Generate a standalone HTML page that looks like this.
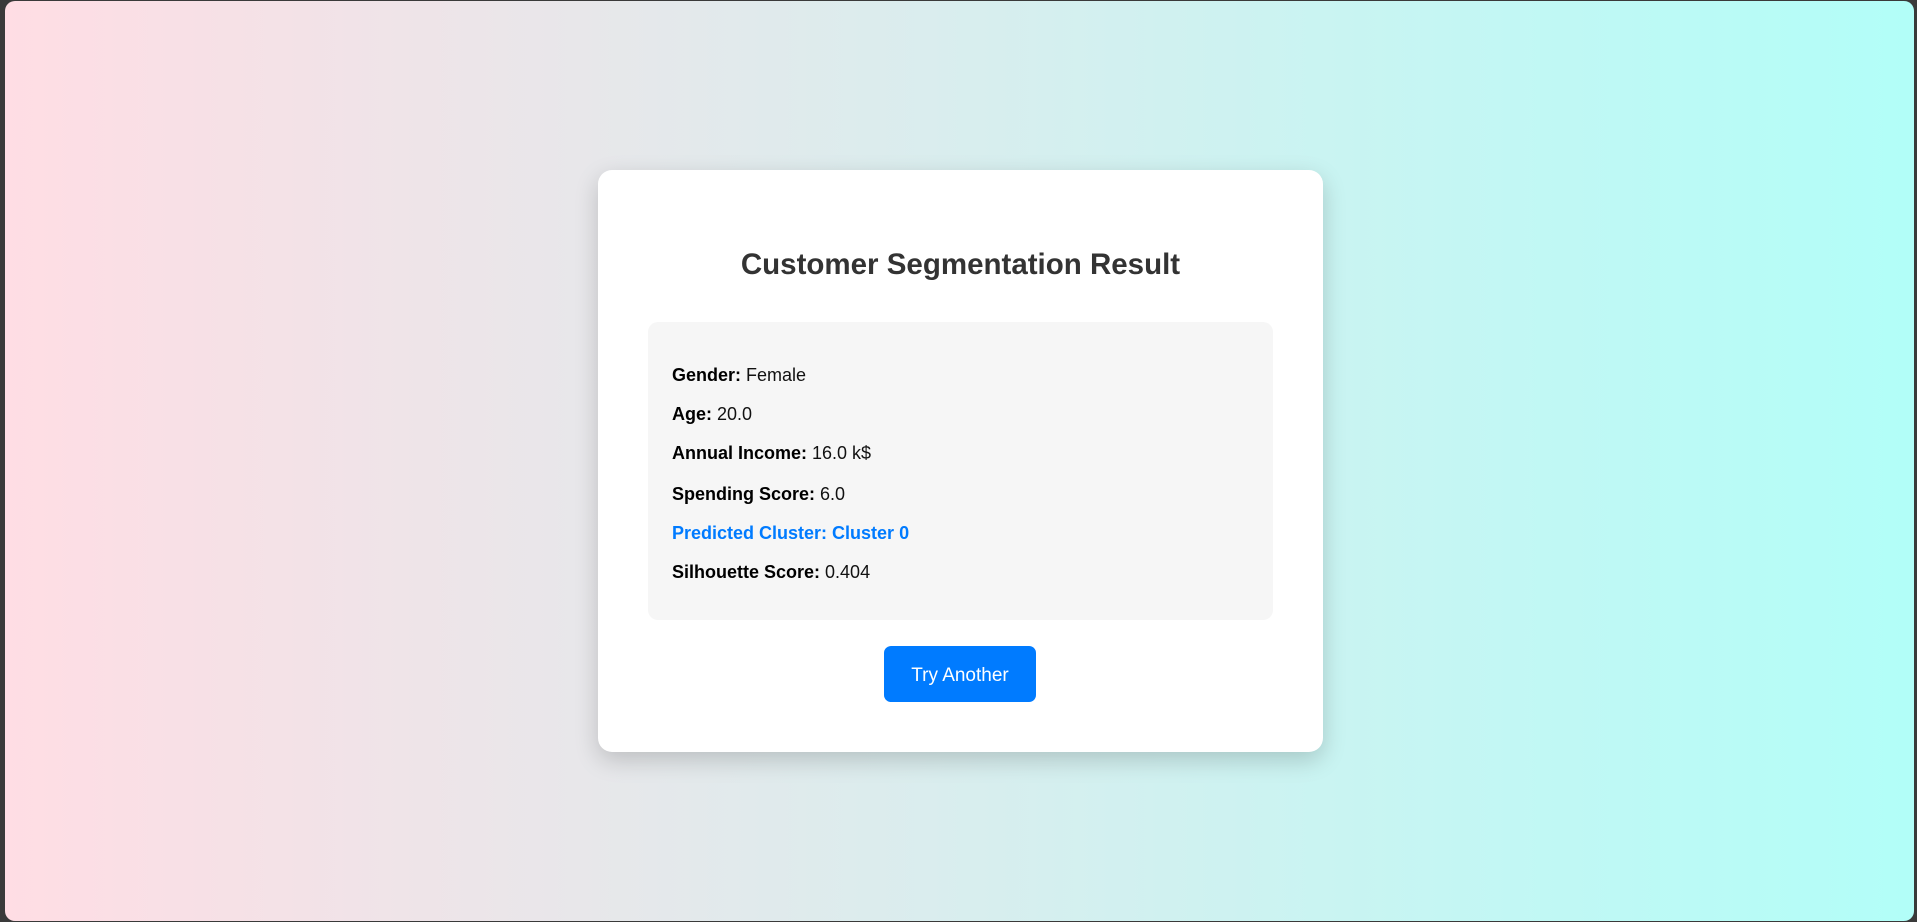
<!DOCTYPE html>
<html><head><meta charset="utf-8"><style>
html,body{margin:0;padding:0;width:1917px;height:922px;overflow:hidden;background:#3a3a3a;font-family:"Liberation Sans",sans-serif}
.win{position:absolute;left:5px;top:1px;width:1909px;height:920px;border-radius:10px;background:linear-gradient(to right,#ffdde4,#b2fef8)}
.card{position:absolute;left:598px;top:170px;width:725px;height:582px;background:#fff;border-radius:14px;box-shadow:0 8px 24px rgba(0,0,0,0.18)}
h1{position:absolute;top:247px;margin:0;text-align:center;font-size:29.5px;font-weight:bold;color:#333;line-height:36px}
.box{position:absolute;left:648px;top:322px;width:625px;height:298px;background:#f6f6f6;border-radius:10px}
.l{position:absolute;left:672px;font-size:18px;color:#111;line-height:24px}
.l b{color:#000}
.blue,.blue b{color:#007bff;font-weight:bold}
.btn{position:absolute;left:884px;top:646px;width:152px;height:56px;background:#007bff;border-radius:7px;color:#fff;font-size:19px;line-height:60px;text-align:center}
</style></head><body>
<div class="win"></div>
<div class="card"></div>
<h1 style="left:598px;width:725px">Customer Segmentation Result</h1>
<div class="box"></div>
<div class="l" style="top:363px"><b>Gender:</b> Female</div>
<div class="l" style="top:402px"><b>Age:</b> 20.0</div>
<div class="l" style="top:441px"><b>Annual Income:</b> 16.0 k$</div>
<div class="l" style="top:482px"><b>Spending Score:</b> 6.0</div>
<div class="l blue" style="top:521px"><b>Predicted Cluster:</b> Cluster 0</div>
<div class="l" style="top:560px"><b>Silhouette Score:</b> 0.404</div>
<div class="btn">Try Another</div>
</body></html>
